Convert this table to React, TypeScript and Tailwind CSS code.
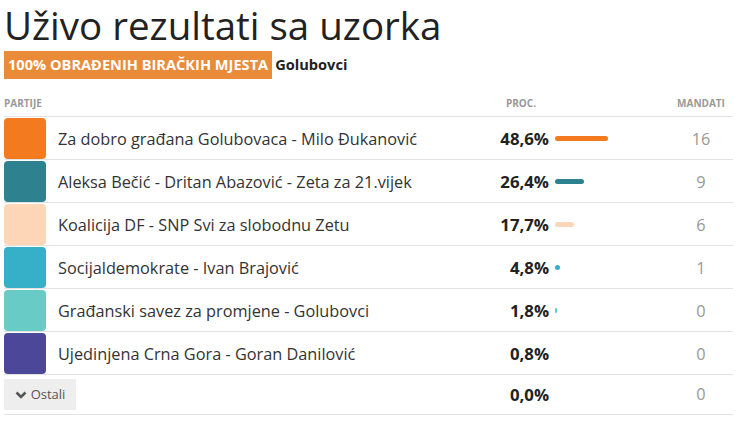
import React from "react";

type Party = { name: string; color: string; pct: number; seats: number };

const parties: Party[] = [
  { name: "Za dobro građana Golubovaca - Milo Đukanović", color: "#f47a20", pct: 48.6, seats: 16 },
  { name: "Aleksa Bečić - Dritan Abazović - Zeta za 21.vijek", color: "#2e8290", pct: 26.4, seats: 9 },
  { name: "Koalicija DF - SNP Svi za slobodnu Zetu", color: "#fdd6b8", pct: 17.7, seats: 6 },
  { name: "Socijaldemokrate - Ivan Brajović", color: "#35b0c8", pct: 4.8, seats: 1 },
  { name: "Građanski savez za promjene - Golubovci", color: "#68cbc6", pct: 1.8, seats: 0 },
  { name: "Ujedinjena Crna Gora - Goran Danilović", color: "#4d479a", pct: 0.8, seats: 0 },
];

const fmt = (n: number) => n.toFixed(1).replace(".", ",") + "%";

const Row = ({ p }: { p: Party }) => {
  return (
    <div className="flex items-center h-[43px] border-b border-[#e3e3e3]">
      <div className="w-[42px] h-[41px] rounded-[4px] shrink-0" style={{ background: p.color }} />
      <div className="flex-1 pl-3 pt-[2px] text-[16.3px] text-[#333] truncate">{p.name}</div>
      <div className="w-[70px] pt-[2px] text-right font-bold text-[16.8px] text-[#222]">{fmt(p.pct)}</div>
      <div className="w-[120px] pl-[6px] pt-[1px] flex items-center">
        {p.pct >= 1 && (
          <div
            className="h-[5px] rounded-full"
            style={{ width: Math.max(p.pct * 1.09, 1), background: p.color }}
          />
        )}
      </div>
      <div className="w-[64px] pt-[2px] text-center text-[16.3px] text-[#999]">{p.seats}</div>
    </div>
  );
};

const App = () => {
  return (
    <div className="w-[749px] h-[431px] bg-white px-[4px] font-['Open_Sans',sans-serif]">
      <h1 className="text-[38.5px] leading-[48px] text-[#222] pt-[1px]">Uživo rezultati sa uzorka</h1>
      <div className="flex items-center mt-[2px] h-[28px]">
        <span className="bg-[#ea8b3a] text-white font-bold text-[14.6px] h-full flex items-center px-[4px]">
          100% OBRAĐENIH BIRAČKIH MJESTA
        </span>
        <span className="font-bold text-[14.6px] text-[#222] ml-[3px]">Golubovci</span>
      </div>
      <div className="w-[729px] mt-[12px]">
        <div className="flex items-center h-[26px] border-b border-[#e3e3e3] text-[10px] font-bold text-[#999]">
          <div className="flex-1">PARTIJE</div>
          <div className="w-[70px] text-right pr-[13px]">PROC.</div>
          <div className="w-[120px]" />
          <div className="w-[64px] text-center">MANDATI</div>
        </div>
        {parties.map((p) => (
          <Row key={p.name} p={p} />
        ))}
        <div className="flex items-center h-[40px] border-b border-[#e3e3e3]">
          <div className="flex-1">
            <button className="bg-[#eeeeee] h-[31px] w-[72px] flex items-center justify-center gap-[4px] text-[13px] text-[#555]">
              <svg width="12" height="10" viewBox="0 0 12 10">
                <path d="M1.5 2.5 L6 7 L10.5 2.5" stroke="#555" strokeWidth="2.6" fill="none" />
              </svg>
              Ostali
            </button>
          </div>
          <div className="w-[70px] text-right font-bold text-[16.8px] text-[#222]">0,0%</div>
          <div className="w-[120px]" />
          <div className="w-[64px] text-center text-[16.3px] text-[#999]">0</div>
        </div>
      </div>
    </div>
  );
};

export default App;
